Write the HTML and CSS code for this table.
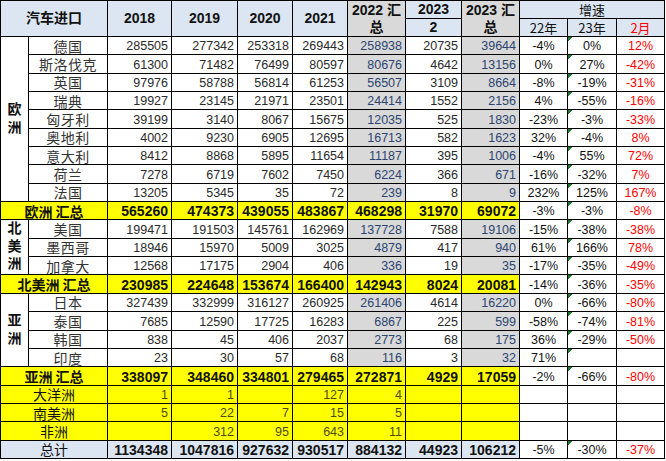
FILE: index.html
```html
<!DOCTYPE html>
<html lang="zh">
<head>
<meta charset="utf-8">
<title>汽车进口</title>
<link rel="stylesheet" href="styles.css">
</head>
<body>
<table class="sheet">
  <colgroup>
    <col class="c-region"><col class="c-name"><col class="c-2018"><col class="c-2019"><col class="c-2020"><col class="c-2021"><col class="c-2022"><col class="c-2023"><col class="c-2023s"><col class="c-g1"><col class="c-g2"><col class="c-g3">
  </colgroup>
  <thead>
    <tr class="hrow">
      <th class="hd" colspan="2" rowspan="2">汽车进口</th>
      <th class="hd" rowspan="2">2018</th>
      <th class="hd" rowspan="2">2019</th>
      <th class="hd" rowspan="2">2020</th>
      <th class="hd" rowspan="2">2021</th>
      <th class="hd grey" rowspan="2">2022 汇<br>总</th>
      <th class="hd">2023</th>
      <th class="hd grey" rowspan="2">2023 汇<br>总</th>
      <th class="hd thin" colspan="3">增速</th>
    </tr>
    <tr class="hrow">
      <th class="hd">2</th>
      <th class="hd thin">22年</th>
      <th class="hd thin">23年</th>
      <th class="hd thin red">2月</th>
    </tr>
  </thead>
  <tbody>
    <tr><td class="region" rowspan="9"><span class="vtext">欧洲</span></td><td class="name">德国</td><td class="n">285505</td><td class="n">277342</td><td class="n">253318</td><td class="n">269443</td><td class="n g">258938</td><td class="n">20735</td><td class="n g">39644</td><td class="p">-4%</td><td class="p tri">0%</td><td class="p red">12%</td></tr>
    <tr><td class="name">斯洛伐克</td><td class="n">61300</td><td class="n">71482</td><td class="n">76499</td><td class="n">80597</td><td class="n g">80676</td><td class="n">4642</td><td class="n g">13156</td><td class="p">0%</td><td class="p tri">27%</td><td class="p red">-42%</td></tr>
    <tr><td class="name">英国</td><td class="n">97976</td><td class="n">58788</td><td class="n">56814</td><td class="n">61253</td><td class="n g">56507</td><td class="n">3109</td><td class="n g">8664</td><td class="p">-8%</td><td class="p tri">-19%</td><td class="p red">-31%</td></tr>
    <tr><td class="name">瑞典</td><td class="n">19927</td><td class="n">23145</td><td class="n">21971</td><td class="n">23501</td><td class="n g">24414</td><td class="n">1552</td><td class="n g">2156</td><td class="p">4%</td><td class="p tri">-55%</td><td class="p red">-16%</td></tr>
    <tr><td class="name">匈牙利</td><td class="n">39199</td><td class="n">3140</td><td class="n">8067</td><td class="n">15675</td><td class="n g">12035</td><td class="n">525</td><td class="n g">1830</td><td class="p">-23%</td><td class="p tri">-3%</td><td class="p red">-33%</td></tr>
    <tr><td class="name">奥地利</td><td class="n">4002</td><td class="n">9230</td><td class="n">6905</td><td class="n">12695</td><td class="n g">16713</td><td class="n">582</td><td class="n g">1623</td><td class="p">32%</td><td class="p tri">-4%</td><td class="p red">8%</td></tr>
    <tr><td class="name">意大利</td><td class="n">8412</td><td class="n">8868</td><td class="n">5895</td><td class="n">11654</td><td class="n g">11187</td><td class="n">395</td><td class="n g">1006</td><td class="p">-4%</td><td class="p tri">55%</td><td class="p red">72%</td></tr>
    <tr><td class="name">荷兰</td><td class="n">7278</td><td class="n">6719</td><td class="n">7602</td><td class="n">7450</td><td class="n g">6224</td><td class="n">366</td><td class="n g">671</td><td class="p">-16%</td><td class="p tri">-32%</td><td class="p red">7%</td></tr>
    <tr><td class="name">法国</td><td class="n">13205</td><td class="n">5345</td><td class="n">35</td><td class="n">72</td><td class="n g">239</td><td class="n">8</td><td class="n g">9</td><td class="p">232%</td><td class="p tri">125%</td><td class="p red">167%</td></tr>
    <tr class="sum"><td class="label" colspan="2">欧洲 汇总</td><td class="b">565260</td><td class="b">474373</td><td class="b">439055</td><td class="b">483867</td><td class="b">468298</td><td class="b">31970</td><td class="b">69072</td><td class="p">-3%</td><td class="p tri">-3%</td><td class="p red">-8%</td></tr>
    <tr><td class="region" rowspan="3"><span class="vtext">北美洲</span></td><td class="name">美国</td><td class="n">199471</td><td class="n">191503</td><td class="n">145761</td><td class="n">162969</td><td class="n g">137728</td><td class="n">7588</td><td class="n g">19106</td><td class="p">-15%</td><td class="p tri">-38%</td><td class="p red">-38%</td></tr>
    <tr><td class="name">墨西哥</td><td class="n">18946</td><td class="n">15970</td><td class="n">5009</td><td class="n">3025</td><td class="n g">4879</td><td class="n">417</td><td class="n g">940</td><td class="p">61%</td><td class="p tri">166%</td><td class="p red">78%</td></tr>
    <tr><td class="name">加拿大</td><td class="n">12568</td><td class="n">17175</td><td class="n">2904</td><td class="n">406</td><td class="n g">336</td><td class="n">19</td><td class="n g">35</td><td class="p">-17%</td><td class="p tri">-35%</td><td class="p red">-49%</td></tr>
    <tr class="sum"><td class="label" colspan="2">北美洲 汇总</td><td class="b">230985</td><td class="b">224648</td><td class="b">153674</td><td class="b">166400</td><td class="b">142943</td><td class="b">8024</td><td class="b">20081</td><td class="p">-14%</td><td class="p tri">-36%</td><td class="p red">-35%</td></tr>
    <tr><td class="region" rowspan="4"><span class="vtext">亚洲</span></td><td class="name">日本</td><td class="n">327439</td><td class="n">332999</td><td class="n">316127</td><td class="n">260925</td><td class="n g">261406</td><td class="n">4614</td><td class="n g">16220</td><td class="p">0%</td><td class="p tri">-66%</td><td class="p red">-80%</td></tr>
    <tr><td class="name">泰国</td><td class="n">7685</td><td class="n">12590</td><td class="n">17725</td><td class="n">16283</td><td class="n g">6867</td><td class="n">225</td><td class="n g">599</td><td class="p">-58%</td><td class="p tri">-74%</td><td class="p red">-81%</td></tr>
    <tr><td class="name">韩国</td><td class="n">838</td><td class="n">45</td><td class="n">406</td><td class="n">2037</td><td class="n g">2773</td><td class="n">68</td><td class="n g">175</td><td class="p">36%</td><td class="p tri">-29%</td><td class="p red">-50%</td></tr>
    <tr><td class="name">印度</td><td class="n">23</td><td class="n">30</td><td class="n">57</td><td class="n">68</td><td class="n g">116</td><td class="n">3</td><td class="n g">32</td><td class="p">71%</td><td class="p tri"></td><td class="p red"></td></tr>
    <tr class="sum"><td class="label" colspan="2">亚洲 汇总</td><td class="b">338097</td><td class="b">348460</td><td class="b">334801</td><td class="b">279465</td><td class="b">272871</td><td class="b">4929</td><td class="b">17059</td><td class="p">-2%</td><td class="p tri">-66%</td><td class="p red">-80%</td></tr>
    <tr class="sum minor"><td class="label2" colspan="2">大洋洲</td><td class="m">1</td><td class="m">1</td><td class="m"></td><td class="m">127</td><td class="m">4</td><td class="m"></td><td class="m"></td><td class="p"></td><td class="p"></td><td class="p"></td></tr>
    <tr class="sum minor"><td class="label2" colspan="2">南美洲</td><td class="m">5</td><td class="m">22</td><td class="m">7</td><td class="m">15</td><td class="m">5</td><td class="m"></td><td class="m"></td><td class="p"></td><td class="p"></td><td class="p"></td></tr>
    <tr class="sum minor"><td class="label2" colspan="2">非洲</td><td class="m"></td><td class="m">312</td><td class="m">95</td><td class="m">643</td><td class="m">11</td><td class="m"></td><td class="m"></td><td class="p"></td><td class="p"></td><td class="p"></td></tr>
    <tr class="total"><td class="label2" colspan="2">总计</td><td class="b">1134348</td><td class="b">1047816</td><td class="b">927632</td><td class="b">930517</td><td class="b">884132</td><td class="b">44923</td><td class="b">106212</td><td class="p">-5%</td><td class="p tri">-30%</td><td class="p red">-37%</td></tr>
  </tbody>
</table>
</body>
</html>
```

FILE: styles.css
```css
html, body {
  margin: 0;
  padding: 0;
  background: #ffffff;
}

body {
  font-family: "Liberation Sans", "Noto Sans CJK SC", sans-serif;
  color: #222;
}

.sheet {
  border-collapse: collapse;
  table-layout: fixed;
  width: 665px;
}

.c-region { width: 28px; }
.c-name { width: 79px; }
.c-2018 { width: 64px; }
.c-2019 { width: 66px; }
.c-2020 { width: 55px; }
.c-2021 { width: 55px; }
.c-2022 { width: 58px; }
.c-2023 { width: 56px; }
.c-2023s { width: 58px; }
.c-g1 { width: 48px; }
.c-g2 { width: 49px; }
.c-g3 { width: 48px; }

.sheet th,
.sheet td {
  border: 1px solid #000;
  padding: 0;
  white-space: nowrap;
  overflow: hidden;
}

.hrow { height: 18px; }

.hd {
  background: #dce6f2;
  font-weight: bold;
  font-size: 14px;
  line-height: 17px;
  color: #111;
  text-align: center;
  vertical-align: middle;
}

.hd.grey { background: #d9d9d9; }

.hd.thin {
  font-weight: normal;
  font-family: "Noto Sans CJK SC", "Liberation Sans", sans-serif;
  font-size: 13px;
  line-height: 16px;
}

.sheet tbody tr { height: 18.35px; }

.region {
  font-family: "Noto Sans CJK SC", sans-serif;
  font-weight: bold;
  font-size: 14px;
  line-height: 0;
  text-align: center;
  vertical-align: middle;
  color: #111;
}

.vtext {
  display: inline-block;
  vertical-align: middle;
  writing-mode: vertical-rl;
  text-orientation: upright;
  letter-spacing: 3.5px;
  line-height: 16px;
  max-height: 52px;
}

.name {
  font-family: "Noto Sans CJK SC", sans-serif;
  font-size: 14px;
  line-height: 16px;
  text-align: center;
  color: #333;
  letter-spacing: 0.5px;
}

.n {
  font-size: 12.5px;
  line-height: 16px;
  text-align: right;
  padding-right: 3px !important;
  color: #2a2a2a;
  vertical-align: bottom;
}

.n.g {
  background: #d9d9d9;
  color: #2c4470;
}

.p {
  font-size: 12.5px;
  line-height: 16px;
  text-align: center;
  color: #111;
  background: #fff;
  vertical-align: bottom;
}

.p.tri {
  background: linear-gradient(135deg, #1e7a2e 0, #1e7a2e 3px, transparent 3.5px) no-repeat 0 0 / 6px 6px, #fff;
}

.red { color: #ff0000; }

.sum td.label,
.sum td.label2,
.sum td.b,
.sum td.m {
  background: #ffff00;
}

.label {
  font-family: "Noto Sans CJK SC", sans-serif;
  font-weight: bold;
  font-size: 14px;
  line-height: 16px;
  text-align: center;
  color: #111;
}

.label2 {
  font-family: "Noto Sans CJK SC", sans-serif;
  font-size: 14px;
  line-height: 16px;
  text-align: center;
  color: #111;
}

.b {
  font-weight: bold;
  font-size: 14px;
  line-height: 16px;
  text-align: right;
  padding-right: 3px !important;
  color: #111;
  vertical-align: bottom;
}

.m {
  font-size: 12.5px;
  line-height: 16px;
  text-align: right;
  padding-right: 3px !important;
  color: #4b4b1e;
  vertical-align: bottom;
}

.total td.label2,
.total td.b {
  background: #dce6f2;
}
```
